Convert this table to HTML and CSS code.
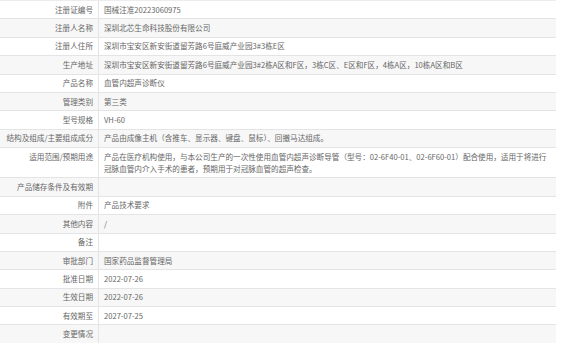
FILE: index.html
```html
<!DOCTYPE html>
<html lang="zh-CN">
<head>
<meta charset="utf-8">
<title>注册证信息</title>
<link rel="stylesheet" href="styles.css">
</head>
<body>
<div class="sheet">
  <div class="row"><div class="label">注册证编号</div><div class="value">国械注准20223060975</div></div>
  <div class="row"><div class="label">注册人名称</div><div class="value">深圳北芯生命科技股份有限公司</div></div>
  <div class="row"><div class="label">注册人住所</div><div class="value">深圳市宝安区新安街道留芳路6号庭威产业园3#3栋E区</div></div>
  <div class="row"><div class="label">生产地址</div><div class="value">深圳市宝安区新安街道留芳路6号庭威产业园3#2栋A区和F区，3栋C区、E区和F区，4栋A区，10栋A区和B区</div></div>
  <div class="row"><div class="label">产品名称</div><div class="value">血管内超声诊断仪</div></div>
  <div class="row"><div class="label">管理类别</div><div class="value">第三类</div></div>
  <div class="row"><div class="label">型号规格</div><div class="value">VH-60</div></div>
  <div class="row"><div class="label">结构及组成/主要组成成分</div><div class="value">产品由成像主机（含推车、显示器、键盘、鼠标）、回撤马达组成。</div></div>
  <div class="row"><div class="label">适用范围/预期用途</div><div class="value">产品在医疗机构使用，与本公司生产的一次性使用血管内超声诊断导管（型号：02-6F40-01、02-6F60-01）配合使用，适用于将进行冠脉血管内介入手术的患者，预期用于对冠脉血管的超声检查。</div></div>
  <div class="row"><div class="label">产品储存条件及有效期</div><div class="value"></div></div>
  <div class="row"><div class="label">附件</div><div class="value">产品技术要求</div></div>
  <div class="row"><div class="label">其他内容</div><div class="value">/</div></div>
  <div class="row"><div class="label">备注</div><div class="value"></div></div>
  <div class="row"><div class="label">审批部门</div><div class="value">国家药品监督管理局</div></div>
  <div class="row"><div class="label">批准日期</div><div class="value">2022-07-26</div></div>
  <div class="row"><div class="label">生效日期</div><div class="value">2022-07-26</div></div>
  <div class="row"><div class="label">有效期至</div><div class="value">2027-07-25</div></div>
  <div class="row"><div class="label">变更情况</div><div class="value"></div></div>
</div>
</body>
</html>
```
FILE: styles.css
```css
html, body {
  margin: 0;
  padding: 0;
  background: #ffffff;
}
body {
  font-family: "Noto Sans CJK SC", "Microsoft YaHei", sans-serif;
  font-size: 7.6px;
  color: #666666;
}
.sheet {
  width: 556px;
}
.row {
  display: grid;
  grid-template-columns: 99px 1fr;
  border-top: 1px solid #e4e4e4;
  background: #ffffff;
}
.row:first-child {
  border-top-color: #ececec;
}
.row:nth-child(even) {
  background: #f7f7f7;
}
.label,
.value {
  line-height: 12px;
  padding: 2.7px 5px;
}
.label {
  text-align: right;
  border-right: 1px solid #e4e4e4;
  white-space: nowrap;
  color: #666666;
}
.value {
  padding-right: 7px;
  color: #666666;
}
```
